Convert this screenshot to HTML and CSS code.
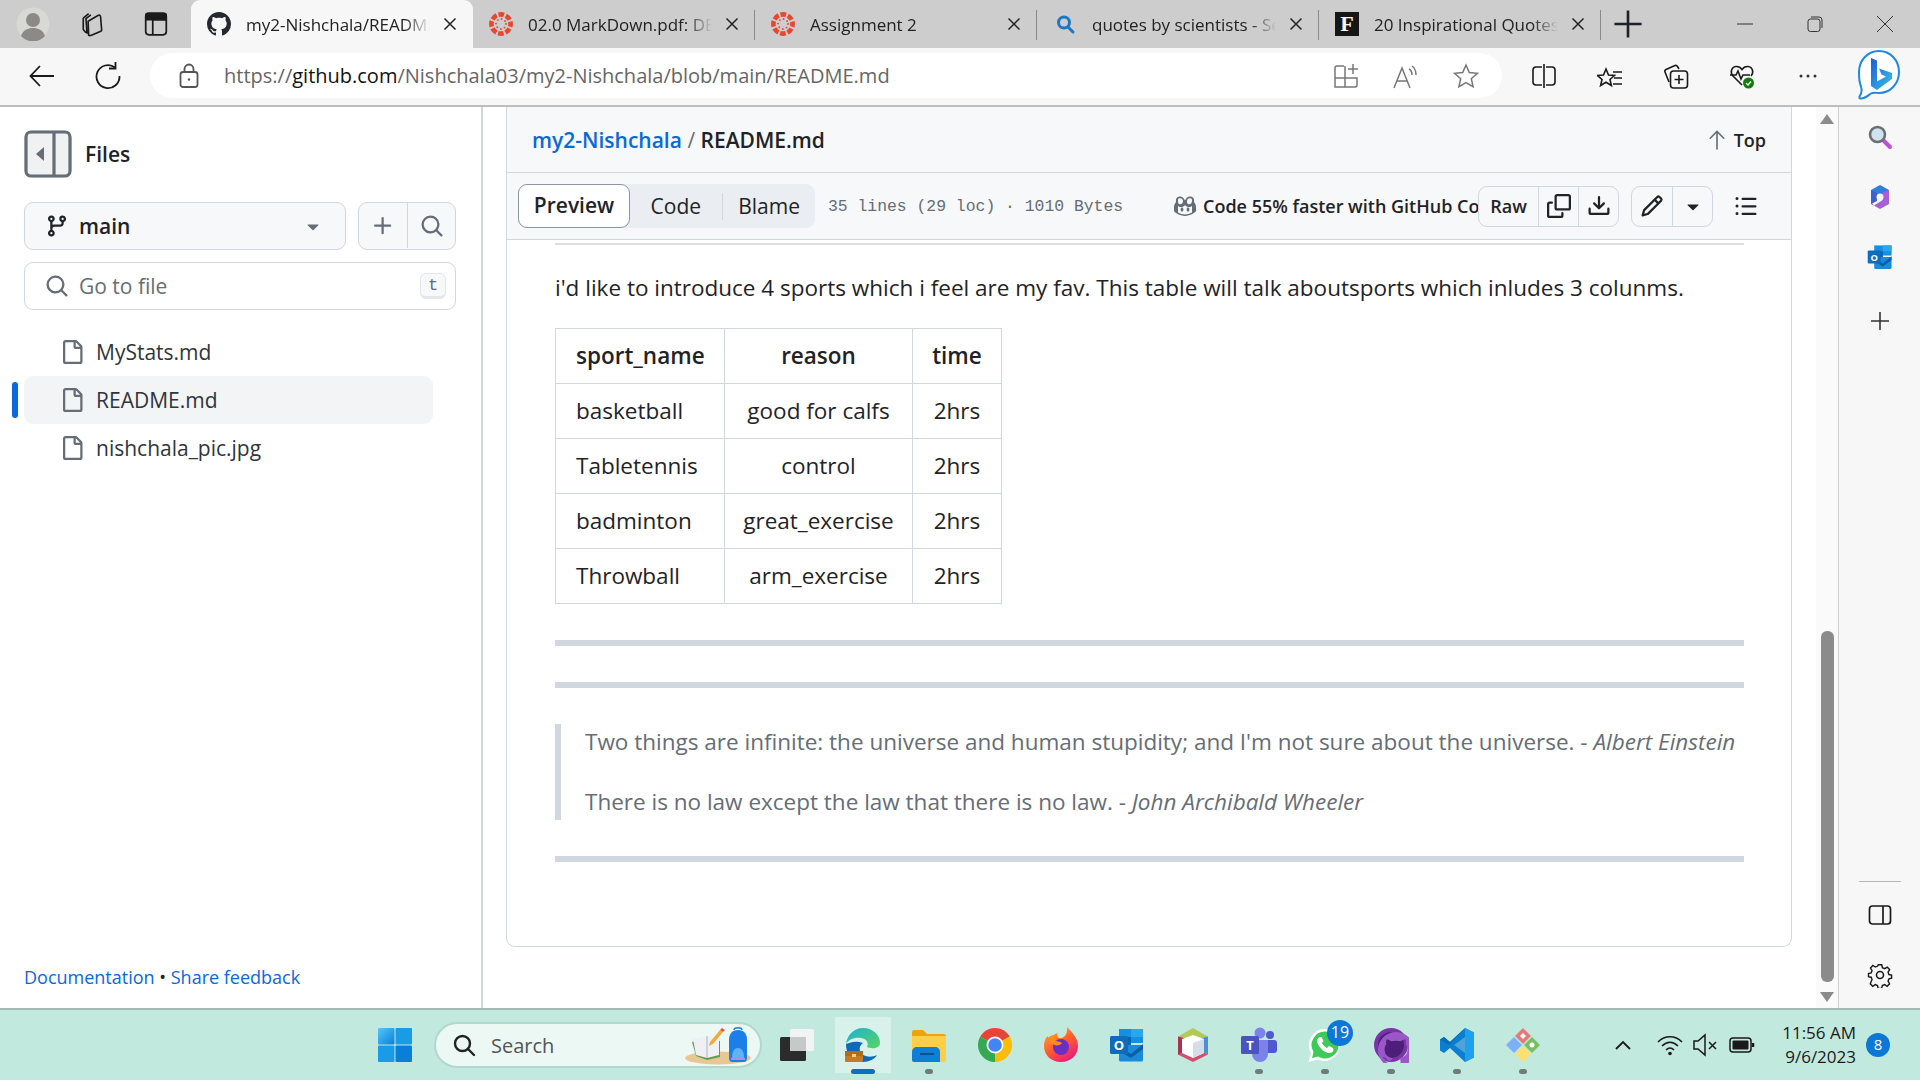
FILE: index.html
```html
<!DOCTYPE html>
<html lang="en">
<head>
  <meta charset="UTF-8">
  <title>my2-Nishchala/README.md</title>
  <link rel="stylesheet" href="styles.css">
</head>
<body>

  <!-- Octicons used more than once -->
  <svg class="sprite">
    <symbol id="i-github" viewBox="0 0 16 16"><path d="M8 0c4.42 0 8 3.58 8 8a8.013 8.013 0 0 1-5.45 7.59c-.4.08-.55-.17-.55-.38 0-.27.01-1.13.01-2.2 0-.75-.25-1.23-.54-1.48 1.78-.2 3.65-.88 3.65-3.95 0-.88-.31-1.59-.82-2.15.08-.2.36-1.02-.08-2.12 0 0-.67-.22-2.2.82-.64-.18-1.32-.27-2-.27-.68 0-1.36.09-2 .27-1.53-1.03-2.2-.82-2.2-.82-.44 1.1-.16 1.92-.08 2.12-.51.56-.82 1.28-.82 2.15 0 3.06 1.86 3.75 3.64 3.95-.23.2-.44.55-.51 1.07-.46.21-1.61.55-2.33-.66-.15-.24-.6-.83-1.23-.82-.67.01-.27.38.01.53.34.19.73.9.82 1.13.16.45.68 1.31 2.69.94 0 .67.01 1.3.01 1.49 0 .21-.15.45-.55.38A7.995 7.995 0 0 1 0 8c0-4.42 3.58-8 8-8Z"/></symbol>
    <symbol id="i-file" viewBox="0 0 16 16"><path d="M2 1.75C2 .784 2.784 0 3.75 0h6.586c.464 0 .909.184 1.237.513l2.914 2.914c.329.328.513.773.513 1.237v9.586A1.75 1.75 0 0 1 13.25 16h-9.5A1.75 1.75 0 0 1 2 14.25Zm1.75-.25a.25.25 0 0 0-.25.25v12.5c0 .138.112.25.25.25h9.5a.25.25 0 0 0 .25-.25V6h-2.75A1.75 1.75 0 0 1 9 4.25V1.5Zm6.75.062V4.25c0 .138.112.25.25.25h2.688l-.011-.013-2.914-2.914-.013-.011Z"/></symbol>
    <symbol id="i-search" viewBox="0 0 16 16"><path d="M10.68 11.74a6 6 0 0 1-7.922-8.982 6 6 0 0 1 8.982 7.922l3.04 3.04a.749.749 0 0 1-.326 1.275.749.749 0 0 1-.734-.215ZM11.5 7a4.499 4.499 0 1 0-8.997 0A4.499 4.499 0 0 0 11.5 7Z"/></symbol>
    <symbol id="i-plus" viewBox="0 0 16 16"><path d="M7.75 2a.75.75 0 0 1 .75.75V7h4.25a.75.75 0 0 1 0 1.5H8.5v4.25a.75.75 0 0 1-1.5 0V8.5H2.75a.75.75 0 0 1 0-1.5H7V2.75A.75.75 0 0 1 7.75 2Z"/></symbol>
    <symbol id="i-caret" viewBox="0 0 16 16"><path d="m4.427 7.427 3.396 3.396a.25.25 0 0 0 .354 0l3.396-3.396A.25.25 0 0 0 11.396 7H4.604a.25.25 0 0 0-.177.427Z"/></symbol>
    <symbol id="i-close" viewBox="0 0 16 16"><path d="M2.5 2.5l11 11M13.5 2.5l-11 11" fill="none" stroke="currentColor" stroke-width="1.5"/></symbol>
    <symbol id="i-canvas" viewBox="0 0 24 24">
      <circle cx="12" cy="12" r="9.6" fill="none" stroke="#e9452f" stroke-width="4.6" stroke-dasharray="5.6 1.94" stroke-dashoffset="2.8"/>
      <circle cx="12" cy="12" r="5" fill="none" stroke="#e9452f" stroke-width="1.9" stroke-linecap="round" stroke-dasharray="0 3.93"/>
    </symbol>
    <symbol id="i-outlook" viewBox="0 0 36 36">
      <rect x="10" y="2" width="24" height="14" fill="#1490df"/>
      <rect x="22" y="2" width="12" height="8" fill="#28a8ea"/>
      <rect x="10" y="10" width="12" height="8" fill="#0364b8"/>
      <path d="M10 18h24v15a1.5 1.5 0 0 1-1.500 1.500H11.500A1.500 1.500 0 0 1 10 33Z" fill="#1a8bd8"/>
      <path d="M10 19l12 8 12-10v5L22 31 10 24Z" fill="#0a5fa8"/>
      <rect x="1" y="9" width="18" height="18" rx="1.500" fill="#0f6cbd"/>
      <text x="10" y="23" class="logo-letter">O</text>
    </symbol>
  </svg>

  <!-- Browser tabs -->
  <header class="tabstrip">
    <div class="strip-left">
      <svg class="avatar" viewBox="0 0 34 34"><circle cx="17" cy="17" r="16.500" fill="#d8d8d4"/><circle cx="17" cy="13" r="7" fill="#8c8a87"/><path d="M5 29c2-6 7-8 12-8s10 2 12 8a16 16 0 0 1-24 0Z" fill="#8c8a87"/></svg>
      <svg class="strip-btn collections" viewBox="0 0 24 24" fill="none" stroke="#1a1a1a" stroke-width="1.500"><path d="M3 6.500 8 2.500M5.500 20 3 17V6.500M6.500 21 5.500 7 10 3.500M8 22.500 7.500 9.500 17 4c1-.5 2 0 2 1.500l1 12c0 .5-.2 1-.8 1.200L10 22.500c-1 .5-2 0-2-0Z"/></svg>
      <svg class="strip-btn vertical-tabs" viewBox="0 0 24 24" fill="none" stroke="#1a1a1a" stroke-width="1.600"><rect x="2.500" y="2" width="19" height="20" rx="3"/><path d="M3 3.500h18V8H9v14" /><path d="M3 3h18v5H3Z" fill="#1a1a1a"/></svg>
    </div>

    <div class="tab active">
      <svg class="fav github-fav"><use href="#i-github"/></svg>
      <span class="tab-title">my2-Nishchala/README.md</span>
      <svg class="tab-close"><use href="#i-close"/></svg>
    </div>
    <div class="tab">
      <svg class="fav"><use href="#i-canvas"/></svg>
      <span class="tab-title">02.0 MarkDown.pdf: DEMO</span>
      <svg class="tab-close"><use href="#i-close"/></svg>
    </div>
    <div class="tab">
      <svg class="fav"><use href="#i-canvas"/></svg>
      <span class="tab-title">Assignment 2</span>
      <svg class="tab-close"><use href="#i-close"/></svg>
    </div>
    <div class="tab">
      <svg class="fav" viewBox="0 0 24 24" fill="none" stroke="#1a78c9" stroke-width="3"><circle cx="11" cy="10.500" r="5.500"/><path d="M15 15l5 5" stroke-linecap="round"/></svg>
      <span class="tab-title">quotes by scientists - Search</span>
      <svg class="tab-close"><use href="#i-close"/></svg>
    </div>
    <div class="tab">
      <span class="fav forbes-fav">F</span>
      <span class="tab-title">20 Inspirational Quotes</span>
      <svg class="tab-close"><use href="#i-close"/></svg>
    </div>

    <svg class="new-tab"><use href="#i-close"/></svg>

    <div class="window-controls">
      <svg viewBox="0 0 16 16" fill="none" stroke="#333" stroke-width="1"><path d="M0 8h16"/></svg>
      <svg viewBox="0 0 16 16" fill="none" stroke="#333" stroke-width="1"><rect x="1" y="3" width="12" height="12.500" rx="2.500"/><path d="M4 1h8a3 3 0 0 1 3 3v8"/></svg>
      <svg viewBox="0 0 16 16" fill="none" stroke="#333" stroke-width="1"><path d="M0 0l16 16M16 0 0 16"/></svg>
    </div>
  </header>

  <!-- Address bar -->
  <div class="toolbar">
    <svg class="tool-icon back" viewBox="0 0 28 28" fill="none" stroke="#1a1a1a" stroke-width="1.800"><path d="M26 14H3M12 4 2.500 14 12 24"/></svg>
    <svg class="tool-icon reload" viewBox="0 0 28 28" fill="none" stroke="#1a1a1a" stroke-width="1.800"><path d="M21 5.500A11.500 11.500 0 1 0 25.500 14"/><path d="M21.500 0v6.500H15"/></svg>
    <div class="address">
      <svg class="lock" viewBox="0 0 20 26" fill="none" stroke="#555" stroke-width="1.800"><rect x="1.500" y="9" width="17" height="15" rx="2.500"/><path d="M5.500 9V6a4.500 4.500 0 0 1 9 0v3"/><circle cx="10" cy="16.500" r="1.200" fill="#555" stroke="none"/></svg>
      <span class="url">https://<b>github.com</b>/Nishchala03/my2-Nishchala/blob/main/README.md</span>
      <div class="address-icons">
        <svg viewBox="0 0 26 26" fill="none" stroke="#777" stroke-width="1.500"><path d="M11 3H4a2 2 0 0 0-2 2v19h20a2 2 0 0 0 2-2V15H2M12 3v21"/><path d="M20 1v10M15 6h10"/></svg>
        <svg viewBox="0 0 26 26" fill="none" stroke="#777" stroke-width="1.500"><path d="M1 25 9 5l8 20M4 18h10M16 6c2 1 3 3 3 6M19 3c3 2 4 5 4 9"/></svg>
        <svg viewBox="0 0 26 26" fill="none" stroke="#777" stroke-width="1.500"><path d="M13 2l3.300 7.500 8.200.8-6.200 5.400 1.800 8-7.100-4.200-7.100 4.200 1.800-8L1.500 10.300l8.200-.8Z"/></svg>
      </div>
    </div>
    <div class="tool-group">
      <svg viewBox="0 0 26 26" fill="none" stroke="#1a1a1a" stroke-width="1.600"><path d="M11 4H5a3 3 0 0 0-3 3v12a3 3 0 0 0 3 3h6M15 4h6a3 3 0 0 1 3 3v12a3 3 0 0 1-3 3h-6M13 1v24"/></svg>
      <svg viewBox="0 0 26 26" fill="none" stroke="#1a1a1a" stroke-width="1.600"><path d="M9 2l2.500 6 6 .5-4.500 4 1.400 6-5.400-3.300-5.400 3.300L5 12.500l-4.500-4 6-.5Z" transform="translate(0 4)"/><path d="M16 9h9M17 15h8M16 21h9"/></svg>
      <svg viewBox="0 0 26 26" fill="none" stroke="#1a1a1a" stroke-width="1.600"><path d="M6 19 2 9c-.4-1 0-2 1-2.500L12 2.500c1-.4 2 0 2.500 1L16 6"/><rect x="7.500" y="8" width="17" height="17" rx="3"/><path d="M16 12v9M11.500 16.500h9"/></svg>
      <svg viewBox="0 0 26 26" fill="none" stroke="#1a1a1a" stroke-width="1.600"><path d="M13 22 4 13C1 10 2 4 7 3.500c3-.3 5 1.500 6 3 1-1.500 3-3.300 6-3 5 .5 6 6.500 3 9.500"/><path d="M1 12h6l2-4 3 8 2-4h7"/><circle cx="19.500" cy="20" r="5.500" fill="#107c10" stroke="none"/><path d="M17 20l2 2 3-3.500" stroke="#fff" stroke-width="1.300"/></svg>
      <svg viewBox="0 0 26 26" fill="#333"><circle cx="6" cy="13" r="1.500"/><circle cx="13" cy="13" r="1.500"/><circle cx="20" cy="13" r="1.500"/></svg>
    </div>
    <svg class="bing" viewBox="0 0 44 54">
      <defs>
        <linearGradient id="bing-b" x1="0" y1="0" x2="1" y2="1"><stop offset="0" stop-color="#1a5bd8"/><stop offset="1" stop-color="#38c4e8"/></linearGradient>
      </defs>
      <path d="M22 2c11 0 20 9 20 21s-9 21-20 21c-3 0-6-.8-8 .5-3 2-6 5-10 5-2 0-2-1-1-3 2-3 2-6 1-9C2 33 2 28 2 23 2 11 11 2 22 2Z" fill="#fff" stroke="#1f87e5" stroke-width="2"/>
      <path d="M14 9l6 2.500v21l9-5-4.500-2-2.500-6 13 4.500v6L20 41l-6-4Z" fill="url(#bing-b)"/>
    </svg>
  </div>

  <div class="page">

    <!-- File tree -->
    <aside class="files">
      <div class="files-head">
        <span class="collapse-btn">
          <svg viewBox="0 0 24 24" fill="none" stroke="#656d76" stroke-width="1.600"><rect x="1" y="1" width="22" height="22" rx="2.500"/><path d="M15 1v22"/><path d="M10 8.500v7L6 12Z" fill="#656d76" stroke="none"/></svg>
        </span>
        <h2>Files</h2>
      </div>

      <div class="branch-row">
        <button class="branch-btn">
          <svg class="icon-24" viewBox="0 0 16 16" fill="#656d76"><path d="M9.500 3.250a2.250 2.250 0 1 1 3 2.122V6A2.500 2.500 0 0 1 10 8.500H6a1 1 0 0 0-1 1v1.128a2.251 2.251 0 1 1-1.500 0V5.372a2.250 2.250 0 1 1 1.500 0v1.836A2.493 2.493 0 0 1 6 7h4a1 1 0 0 0 1-1v-.628A2.250 2.250 0 0 1 9.500 3.250Zm-6 0a.750.750 0 1 0 1.500 0 .750.750 0 0 0-1.500 0Zm8.250-.750a.750.750 0 1 0 0 1.500.750.750 0 0 0 0-1.500ZM4.250 12a.750.750 0 1 0 0 1.500.750.750 0 0 0 0-1.500Z"/></svg>
          <span>main</span>
          <svg class="icon-24 branch-caret"><use href="#i-caret"/></svg>
        </button>
        <div class="btn-group square-btns">
          <button><svg class="icon-24"><use href="#i-plus"/></svg></button>
          <button><svg class="icon-24"><use href="#i-search"/></svg></button>
        </div>
      </div>

      <div class="go-to-file">
        <svg class="icon-24"><use href="#i-search"/></svg>
        <span>Go to file</span>
        <kbd>t</kbd>
      </div>

      <ul class="tree">
        <li><svg class="icon-24"><use href="#i-file"/></svg>MyStats.md</li>
        <li class="current"><svg class="icon-24"><use href="#i-file"/></svg>README.md</li>
        <li><svg class="icon-24"><use href="#i-file"/></svg>nishchala_pic.jpg</li>
      </ul>

      <p class="files-foot"><a href="#">Documentation</a> • <a href="#">Share feedback</a></p>
    </aside>

    <!-- File view -->
    <main class="content">
      <section class="card">
        <div class="card-head">
          <div class="crumbs"><a href="#">my2-Nishchala</a> <i>/</i> <b>README.md</b></div>
          <div class="top-link">
            <svg viewBox="0 0 20 24" fill="none" stroke="#656d76" stroke-width="1.800" stroke-linecap="round"><path d="M10 22V3M2.500 10 10 2.500l7.500 7.500"/></svg>
            Top
          </div>
        </div>

        <div class="card-tools">
          <div class="segmented">
            <span class="seg selected">Preview</span>
            <span class="seg">Code</span>
            <i class="seg-line"></i>
            <span class="seg">Blame</span>
          </div>
          <span class="file-meta">35 lines (29 loc) · 1010 Bytes</span>
          <div class="copilot">
            <svg viewBox="0 0 24 24" fill="#656d76"><path d="M12 6.500C10.500 3 8.500 2 6 2.500 3.500 3 2.500 5 3 8c-1 1-2 3-2 5v4c0 1 6 5 11 5s11-4 11-5v-4c0-2-1-4-2-5 .5-3-.5-5-3-5.500-2.500-.5-4.500.5-6 4ZM5 7c-.2-1.500.3-2.500 1.500-2.700 1.800-.3 3.500.5 3.500 3 0 2-1.500 3-3 3S5 9 5 7Zm9 .3c0-2.500 1.700-3.300 3.500-3C18.700 4.500 19.200 5.500 19 7c0 2-1.500 3.300-3 3.300S14 9.300 14 7.300ZM12 11c1 1.500 2.500 2 4 2 1.500 0 2.500-.5 3-1v6.500c-2 1.300-4.500 2-7 2s-5-.7-7-2V12c.5.500 1.500 1 3 1 1.500 0 3-.5 4-2Zm-3 2.500c-.8 0-1.300.5-1.300 1.500v1c0 1 .5 1.500 1.300 1.500s1.300-.5 1.300-1.500v-1c0-1-.5-1.500-1.300-1.500Zm6 0c-.8 0-1.300.5-1.300 1.500v1c0 1 .5 1.500 1.300 1.500s1.300-.5 1.300-1.500v-1c0-1-.5-1.500-1.300-1.500Z" fill-rule="evenodd"/></svg>
            <span>Code 55% faster with GitHub Copilot</span>
          </div>
          <div class="btn-group raw-btns">
            <button class="raw">Raw</button>
            <button>
              <svg class="icon-24" viewBox="0 0 16 16"><path d="M0 6.750C0 5.784.784 5 1.750 5h1.500a.750.750 0 0 1 0 1.500h-1.500a.250.250 0 0 0-.250.250v7.500c0 .138.112.250.250.250h7.500a.250.250 0 0 0 .250-.250v-1.500a.750.750 0 0 1 1.500 0v1.500A1.750 1.750 0 0 1 9.250 16h-7.500A1.750 1.750 0 0 1 0 14.250Z"/><path d="M5 1.750C5 .784 5.784 0 6.750 0h7.500C15.216 0 16 .784 16 1.750v7.500A1.750 1.750 0 0 1 14.250 11h-7.500A1.750 1.750 0 0 1 5 9.250Zm1.750-.250a.250.250 0 0 0-.250.250v7.500c0 .138.112.250.250.250h7.500a.250.250 0 0 0 .250-.250v-7.500a.250.250 0 0 0-.250-.250Z"/></svg>
            </button>
            <button>
              <svg class="icon-24" viewBox="0 0 16 16"><path d="M2.750 14A1.750 1.750 0 0 1 1 12.250v-2.500a.750.750 0 0 1 1.500 0v2.500c0 .138.112.250.250.250h10.500a.250.250 0 0 0 .250-.250v-2.500a.750.750 0 0 1 1.500 0v2.500A1.750 1.750 0 0 1 13.250 14Z"/><path d="M7.250 7.689V2a.750.750 0 0 1 1.500 0v5.689l1.970-1.969a.749.749 0 1 1 1.060 1.060l-3.250 3.250a.749.749 0 0 1-1.060 0L4.220 6.780a.749.749 0 1 1 1.060-1.060l1.970 1.969Z"/></svg>
            </button>
          </div>
          <div class="btn-group edit-btns">
            <button>
              <svg class="icon-24" viewBox="0 0 16 16"><path d="M11.013 1.427a1.750 1.750 0 0 1 2.474 0l1.086 1.086a1.750 1.750 0 0 1 0 2.474l-8.610 8.610c-.210.210-.470.364-.756.445l-3.251.930a.750.750 0 0 1-.927-.928l.929-3.250c.081-.286.235-.547.445-.758l8.610-8.610Zm.176 4.823L9.750 4.810l-6.286 6.287a.253.253 0 0 0-.064.108l-.558 1.953 1.953-.558a.253.253 0 0 0 .108-.064Zm1.238-3.763a.250.250 0 0 0-.354 0L10.811 3.750l1.439 1.440 1.263-1.263a.250.250 0 0 0 0-.354Z"/></svg>
            </button>
            <button><svg class="icon-24"><use href="#i-caret"/></svg></button>
          </div>
          <svg class="icon-24 outline-btn" viewBox="0 0 16 16" fill="#656d76"><path d="M5.750 2.500h8.500a.750.750 0 0 1 0 1.500h-8.500a.750.750 0 0 1 0-1.500Zm0 5h8.500a.750.750 0 0 1 0 1.500h-8.500a.750.750 0 0 1 0-1.500Zm0 5h8.500a.750.750 0 0 1 0 1.500h-8.500a.750.750 0 0 1 0-1.500ZM2 14a1 1 0 1 1 0-2 1 1 0 0 1 0 2Zm1-6a1 1 0 1 1-2 0 1 1 0 0 1 2 0ZM2 4a1 1 0 1 1 0-2 1 1 0 0 1 0 2Z"/></svg>
        </div>

        <article class="markdown">
          <div class="cut-rule"></div>
          <p>i'd like to introduce 4 sports which i feel are my fav. This table will talk aboutsports which inludes 3 colunms.</p>

          <table>
            <thead>
              <tr><th>sport_name</th><th>reason</th><th>time</th></tr>
            </thead>
            <tbody>
              <tr><td>basketball</td><td>good for calfs</td><td>2hrs</td></tr>
              <tr><td>Tabletennis</td><td>control</td><td>2hrs</td></tr>
              <tr><td>badminton</td><td>great_exercise</td><td>2hrs</td></tr>
              <tr><td>Throwball</td><td>arm_exercise</td><td>2hrs</td></tr>
            </tbody>
          </table>

          <hr>
          <hr>

          <blockquote>
            <p>Two things are infinite: the universe and human stupidity; and I'm not sure about the universe. - <em>Albert Einstein</em></p>
            <p>There is no law except the law that there is no law. - <em>John Archibald Wheeler</em></p>
          </blockquote>

          <hr>
        </article>
      </section>
    </main>

    <!-- Page scrollbar -->
    <div class="scrollbar">
      <i class="arrow-up"></i>
      <i class="thumb"></i>
      <i class="arrow-down"></i>
    </div>

    <!-- Edge sidebar -->
    <aside class="edge-bar">
      <svg viewBox="0 0 26 26" fill="none"><path d="M16 16l7 7" stroke="#c04fd8" stroke-width="4" stroke-linecap="round"/><circle cx="10.500" cy="10.500" r="7.500" fill="#cfe3ee" stroke="#6b6f73" stroke-width="2.600"/></svg>
      <svg viewBox="0 0 26 26"><path d="M13 1 22 6v6H4V6Z" fill="#2d7fd8"/><path d="M4 6l6 3v8l-6 3Z" fill="#3f5fd0"/><path d="M22 6v14l-9 5-6-3.500 8-5V9Z" fill="#a560d8"/><path d="M4 18l3 3.500 6 3.500-9-5Z" fill="#7a4fc8"/><circle cx="13" cy="13" r="3.500" fill="#f7f7f7"/></svg>
      <svg viewBox="0 0 36 36"><use href="#i-outlook"/></svg>
      <svg class="edge-plus" viewBox="0 0 26 26" fill="none" stroke="#333" stroke-width="1.600"><path d="M13 4v18M4 13h18"/></svg>
      <i class="edge-rule"></i>
      <svg viewBox="0 0 26 26" fill="none" stroke="#1a1a1a" stroke-width="1.700"><rect x="2.500" y="4" width="21" height="18" rx="3"/><path d="M16 4v18"/></svg>
      <svg viewBox="0 0 26 26" fill="none" stroke="#1a1a1a" stroke-width="1.600"><circle cx="13" cy="13" r="3.500"/><path d="M11 1.500h4l.7 3.300 2.600 1.100 2.900-1.800 2.700 2.900-1.800 2.800 1 2.700 3 .7v3.500l-3 .7-1 2.600 1.700 2.900-2.800 2.800-2.800-1.800-2.600 1-.7 3.200h-4l-.7-3.200-2.600-1-2.800 1.800-2.800-2.800L4 18.100l-1-2.600-3-.7v-3.500l3-.7 1-2.700-1.800-2.800 2.700-2.900 2.900 1.800 2.600-1.100Z" transform="translate(1.500 1.500) scale(.885)"/></svg>
    </aside>
  </div>

  <!-- Windows taskbar -->
  <footer class="taskbar">
    <svg class="win-logo" viewBox="0 0 36 36">
      <defs>
        <linearGradient id="win-a" x1="0" y1="0" x2="1" y2="1"><stop offset="0" stop-color="#52c8fa"/><stop offset="1" stop-color="#0a7fd8"/></linearGradient>
      </defs>
      <rect x="1" y="1" width="16.500" height="16.500" rx="1" fill="url(#win-a)"/>
      <rect x="18.500" y="1" width="16.500" height="16.500" rx="1" fill="#1a9be8"/>
      <rect x="1" y="18.500" width="16.500" height="16.500" rx="1" fill="#1a9be8"/>
      <rect x="18.500" y="18.500" width="16.500" height="16.500" rx="1" fill="#0a7fd8"/>
    </svg>

    <div class="task-search">
      <svg viewBox="0 0 24 24" fill="none" stroke="#222" stroke-width="2.400"><circle cx="10.500" cy="10.500" r="7.500"/><path d="M16 16l6 6" stroke-linecap="round"/></svg>
      <span>Search</span>
      <svg class="search-art" viewBox="0 0 70 40">
        <ellipse cx="34" cy="33" rx="33" ry="6.500" fill="#e9c795"/>
        <path d="M8 17l15-4 13 3v16l-13 3-11-4Z" fill="#5ea04e"/>
        <path d="M9 14l14-3 12 3v16l-12 3-11-3Z" fill="#eef0f4"/>
        <path d="M23 11v22" stroke="#a9b4c4"/>
        <path d="M26 17l10-12 3 2-10 12-4 2Z" fill="#f3a93c"/>
        <path d="M36 5l2-2 3 2-2 2Z" fill="#e8533c"/>
        <path d="M45 15c0-6 3-10 9-10s9 4 9 10v18c0 2-1 4-3 4H48c-2 0-3-2-3-4Z" fill="#1c7ee8"/>
        <path d="M48 33c0-6 2-10 6-10s6 4 6 10Z" fill="#5cb4f2"/>
        <path d="M50 5c0-3 8-3 8 0" fill="none" stroke="#1c7ee8" stroke-width="1.500"/>
        <rect x="47" y="33" width="14" height="2" fill="#b28ae8"/>
      </svg>
    </div>

    <div class="task-icons">
      <div class="task-item">
        <svg viewBox="0 0 36 36"><rect x="11" y="2" width="24" height="22" rx="1.500" fill="#f1f4f3"/><rect x="1" y="10" width="26" height="24" rx="1.500" fill="#2b2b2b"/><rect x="11" y="10" width="16" height="14" fill="#c6c9c9"/></svg>
      </div>
      <div class="task-item active">
        <svg viewBox="0 0 36 36">
          <defs>
            <linearGradient id="edge-g" x1="0" y1="0" x2="1" y2="1"><stop offset="0" stop-color="#1eb0d8"/><stop offset="1" stop-color="#57d65c"/></linearGradient>
          </defs>
          <path d="M18 1C9 1 2 8 1 17c3-5 9-7 15-6 6 1 8 5 6 9 4 2 13 2 13-4C35 8 28 1 18 1Z" fill="url(#edge-g)"/>
          <path d="M1 17c-.5 9 6 18 17 18 6 0 12-3 14-7-6 3-15 2-17-4-1-3 0-6 3-8-8-3-14 0-17 1Z" fill="#0d6ab8"/>
          <rect x="0" y="24" width="18" height="11" rx="1" fill="#c77a1f"/>
          <rect x="0" y="24" width="18" height="5" fill="#b5691a"/>
          <rect x="7" y="27" width="4" height="3" fill="#f8d27a"/>
        </svg>
        <i class="run-bar"></i>
      </div>
      <div class="task-item">
        <svg viewBox="0 0 36 36"><path d="M1 5a2 2 0 0 1 2-2h9l4 4h17a2 2 0 0 1 2 2v4H1Z" fill="#e8a50f"/><path d="M1 9h34v24a2 2 0 0 1-2 2H3a2 2 0 0 1-2-2Z" fill="#fbcf4a"/><path d="M1 25c0-3 2-5 5-5h18c3 0 5 2 5 5v10H3a2 2 0 0 1-2-2Z" fill="#0f7fd6"/><path d="M9 27h14" stroke="#0a4f90" stroke-width="2"/></svg>
        <i class="run-dot"></i>
      </div>
      <div class="task-item">
        <svg viewBox="0 0 36 36"><path d="M18 18 3.300 9.500A17 17 0 0 1 32.700 9.500Z" fill="#ea4335"/><path d="M18 18 32.700 9.500A17 17 0 0 1 18 35Z" fill="#fbbc05"/><path d="M18 18 18 35A17 17 0 0 1 3.300 9.500Z" fill="#34a853"/><circle cx="18" cy="18" r="8.500" fill="#fff"/><circle cx="18" cy="18" r="6.800" fill="#4285f4"/></svg>
      </div>
      <div class="task-item">
        <svg viewBox="0 0 36 36">
          <defs>
            <linearGradient id="ff-g" x1="0" y1="0" x2=".6" y2="1"><stop offset="0" stop-color="#ffb02e"/><stop offset=".6" stop-color="#ff5a2e"/><stop offset="1" stop-color="#e8207a"/></linearGradient>
          </defs>
          <path d="M24 0c5 5 11 11 11 19 0 9-7 16-17 16S1 28 1 19c0-4 1-8 4-10 0 2 1 4 2 4 1-3 4-6 8-7-2 3-1 4 1 5 5 1 9-4 8-11Z" fill="url(#ff-g)"/>
          <circle cx="18" cy="20" r="8" fill="#6a2fc0"/>
          <path d="M4 12c3-4 8-5 12-3-3 1-4 3-4 5 3 0 6 1 7 2-2 3-7 3-9 1-3-1-5-3-6-5Z" fill="#ff8a1e"/>
        </svg>
      </div>
      <div class="task-item">
        <svg viewBox="0 0 36 36"><use href="#i-outlook"/></svg>
      </div>
      <div class="task-item">
        <svg viewBox="0 0 36 36"><path d="M18 1 33 9.500 18 13 3 9.500Z" fill="#b2c957"/><path d="M3 9.500 18 13v4L7 12v14l-4 2Z" fill="#a8344e"/><path d="M33 9.500v18l-4-2V12L18 17v-4Z" fill="#4a90d4"/><path d="M3 27.500 18 35l15-7.500-4-2-11 5-11-5Z" fill="#d84a6e"/><path d="M7 12l11-4 11 4v14l-11 5-11-5Z" fill="#fff"/><path d="M18 16l11-4v14l-11 5Z" fill="#d5dde8"/></svg>
      </div>
      <div class="task-item">
        <svg viewBox="0 0 36 36"><circle cx="29" cy="8" r="4" fill="#5059c9"/><rect x="24" y="13" width="12" height="13" rx="3" fill="#5059c9"/><circle cx="19" cy="6" r="5.500" fill="#7b83eb"/><path d="M11 13h16v14a8 8 0 0 1-16 0Z" fill="#7b83eb"/><rect x="0" y="9" width="18" height="18" rx="1.500" fill="#4b53bc"/><text x="9" y="23" class="logo-letter">T</text></svg>
        <i class="run-dot"></i>
      </div>
      <div class="task-item">
        <svg viewBox="0 0 36 36"><path d="M18 2A16 16 0 0 0 4 26L1.500 35l9-2.500A16 16 0 1 0 18 2Z" fill="#fff"/><path d="M18 4.500A13.500 13.500 0 0 0 6.500 25l-1.500 6 6-1.500A13.500 13.500 0 1 0 18 4.500Z" fill="#3ec958"/><path d="M12.500 10c-2 1-3 3-2 6 2 5 6 9 11 10 3 0 5-1 5-3l-.5-2-4-2-2 2c-2-1-4-3-5-5l1.500-2-2-4Z" fill="#fff"/></svg>
        <span class="count-badge">19</span>
        <i class="run-dot"></i>
      </div>
      <div class="task-item">
        <svg viewBox="0 0 36 36"><circle cx="18" cy="18" r="17" fill="#7b34a8"/><circle cx="18" cy="18" r="13" fill="#4d1f78"/><svg x="5" y="5" width="26" height="26" fill="#9a57c8"><use href="#i-github"/></svg></svg>
        <i class="run-dot"></i>
      </div>
      <div class="task-item">
        <svg viewBox="0 0 36 36"><path d="M26 1 35 5.500v25L26 35 11 21l-6 5-4-2.500V12.500L5 10l6 5Z" fill="#0a7ed0"/><path d="M26 1 35 5.500v25L26 35Z" fill="#1ea0ee"/><path d="M26 10v16L15 18Z" fill="#d0e8e0" opacity=".35"/><path d="M26 1 11 15 5 10 1 12.500l9 5.500" fill="#0a6cb5"/></svg>
        <i class="run-dot"></i>
      </div>
      <div class="task-item">
        <svg viewBox="0 0 36 36"><path d="M9 10 17 18 9 26 1 18Z" fill="#7eb0f8"/><path d="M18 1l8 8-8 8-8-8Z" fill="#e67a78"/><path d="M27 10l8 8-8 8-8-8Z" fill="#76c060"/><path d="M18 19l8 8-8 8-8-8Z" fill="#fbe070"/><path d="M18 6l3 3-3 3-3-3Z" fill="#fff"/><circle cx="27" cy="18" r="2.500" fill="#fff"/></svg>
        <i class="run-dot"></i>
      </div>
    </div>

    <div class="tray">
      <svg class="tray-chevron" viewBox="0 0 24 24" fill="none" stroke="#1a1a1a" stroke-width="1.800"><path d="M5 16l7-7 7 7"/></svg>
      <svg class="tray-wifi" viewBox="0 0 26 26" fill="none" stroke="#1a1a1a" stroke-width="1.600"><path d="M1 10c7-7 17-7 24 0M5 14c5-5 11-5 16 0M9 18c2.500-2.500 5.500-2.500 8 0"/><circle cx="13" cy="21.500" r="1.800" fill="#1a1a1a" stroke="none"/></svg>
      <svg class="tray-volume" viewBox="0 0 26 26" fill="none" stroke="#1a1a1a" stroke-width="1.500"><path d="M2 9h4l7-6v20l-7-6H2Z"/><path d="M17 10l7 7M24 10l-7 7"/></svg>
      <svg class="tray-battery" viewBox="0 0 26 18" fill="none" stroke="#1a1a1a" stroke-width="1.500"><rect x="1" y="2" width="21" height="14" rx="3"/><rect x="3.500" y="4.500" width="16" height="9" rx="1" fill="#1a1a1a" stroke="none"/><path d="M24 7v4" stroke-width="2.500"/></svg>
      <div class="clock">11:56 AM<br>9/6/2023</div>
      <span class="notify">8</span>
    </div>
  </footer>

</body>
</html>
```

FILE: styles.css
```css
/* Basic Reset */
* {
  margin: 0;
  padding: 0;
  box-sizing: border-box;
}

body {
  width: 1920px;
  height: 1080px;
  overflow: hidden;
  display: flex;
  flex-direction: column;
  font-family: "Open Sans", "Liberation Sans", sans-serif;
  font-size: 22px;
  color: #1f2328;
  background-color: #fff;
}

.sprite {
  display: none;
}

.logo-letter {
  font-family: "Open Sans", sans-serif;
  font-size: 13px;
  font-weight: 700;
  fill: #fff;
  text-anchor: middle;
}

svg {
  flex-shrink: 0;
}

a {
  color: #0969da;
  text-decoration: none;
}

button {
  font: inherit;
  color: inherit;
  border: none;
  background: none;
}

.icon-24 {
  width: 24px;
  height: 24px;
  fill: currentColor;
}

/* Tab strip */
.tabstrip {
  height: 48px;
  display: flex;
  align-items: center;
  background-color: #cdcdcd;
}

.strip-left {
  width: 191px;
  display: flex;
  align-items: center;
}

.avatar {
  width: 34px;
  height: 34px;
  margin-left: 16px;
}

.strip-btn {
  width: 26px;
  height: 26px;
}

.collections {
  margin-left: 30px;
}

.vertical-tabs {
  margin-left: 37px;
}

.tab {
  position: relative;
  width: 282px;
  height: 48px;
  display: flex;
  align-items: center;
  font-size: 17px;
  color: #222;
}

.tab::after {
  content: "";
  position: absolute;
  right: 0;
  top: 10px;
  height: 30px;
  width: 1px;
  background-color: #8a8a8a;
}

.tab.active {
  background-color: #f7f7f7;
  border-radius: 9px 9px 0 0;
}

.tab.active::after {
  display: none;
}

.fav {
  width: 24px;
  height: 24px;
  margin-left: 16px;
}

.github-fav {
  fill: #24292f;
}

.forbes-fav {
  display: flex;
  align-items: center;
  justify-content: center;
  background-color: #161616;
  color: #fff;
  font-family: "Liberation Serif", serif;
  font-weight: 700;
  font-size: 22px;
}

.tab-title {
  width: 184px;
  margin-left: 15px;
  overflow: hidden;
  white-space: nowrap;
  -webkit-mask-image: linear-gradient(to right, #000 86%, transparent 100%);
  mask-image: linear-gradient(to right, #000 86%, transparent 100%);
}

.tab-close {
  width: 16px;
  height: 16px;
  margin-left: auto;
  margin-right: 15px;
}

.new-tab {
  width: 28px;
  height: 28px;
  margin-left: 13px;
  transform: rotate(45deg);
}

.window-controls {
  margin-left: auto;
  display: flex;
}

.window-controls svg {
  width: 16px;
  height: 16px;
  margin: 0 27px;
}

/* Address bar */
.toolbar {
  height: 59px;
  display: flex;
  align-items: center;
  padding-bottom: 2px;
  background-color: #f7f7f7;
  border-bottom: 2px solid #bdbdbd;
}

.tool-icon {
  width: 28px;
  height: 28px;
}

.back {
  margin-left: 28px;
}

.reload {
  margin-left: 38px;
}

.address {
  width: 1352px;
  height: 45px;
  margin-left: 28px;
  padding: 0 23px 0 29px;
  display: flex;
  align-items: center;
  background-color: #fff;
  border-radius: 23px;
}

.lock {
  width: 20px;
  height: 26px;
}

.url {
  margin-left: 25px;
  font-size: 20px;
  color: #666;
  white-space: nowrap;
}

.url b {
  font-weight: 400;
  color: #111;
}

.address-icons {
  margin-left: auto;
  display: flex;
  gap: 34px;
}

.address-icons svg {
  width: 26px;
  height: 26px;
}

.tool-group {
  margin-left: 29px;
  display: flex;
  gap: 40px;
}

.tool-group svg {
  width: 26px;
  height: 26px;
}

.bing {
  width: 46px;
  height: 54px;
  margin-left: 35px;
}

/* Main area */
.page {
  flex: 1;
  min-height: 0;
  display: flex;
}

/* File tree */
.files {
  width: 483px;
  display: flex;
  flex-direction: column;
  padding: 23px 25px 0 24px;
  border-right: 2px solid #d0d7de;
}

.files-head {
  display: flex;
  align-items: center;
  gap: 13px;
}

.files-head h2 {
  font-size: 21px;
  font-weight: 600;
}

.collapse-btn {
  width: 48px;
  height: 48px;
  display: flex;
  align-items: center;
  justify-content: center;
  background-color: #eff1f3;
  border-radius: 9px;
}

.branch-row {
  margin-top: 24px;
  display: flex;
  gap: 12px;
}

.branch-btn {
  flex: 1;
  height: 48px;
  display: flex;
  align-items: center;
  gap: 10px;
  padding: 0 20px;
  font-size: 21px;
  font-weight: 600;
  background-color: #f6f8fa;
  border: 1.5px solid #d0d7de;
  border-radius: 9px;
}

.branch-caret {
  margin-left: auto;
  fill: #656d76;
}

.btn-group {
  display: flex;
  background-color: #f6f8fa;
  border: 1.5px solid #d0d7de;
  border-radius: 9px;
}

.btn-group button {
  display: flex;
  align-items: center;
  justify-content: center;
  border-left: 1.5px solid #d0d7de;
}

.btn-group button:first-child {
  border-left: none;
}

.square-btns button {
  width: 48px;
  height: 45px;
  color: #656d76;
}

.go-to-file {
  height: 48px;
  margin-top: 12px;
  display: flex;
  align-items: center;
  gap: 10px;
  padding: 0 9px 0 20px;
  font-size: 21px;
  color: #656d76;
  border: 1.5px solid #d0d7de;
  border-radius: 9px;
}

.go-to-file kbd {
  margin-left: auto;
  width: 26px;
  height: 26px;
  line-height: 24px;
  text-align: center;
  font-family: "Liberation Mono", monospace;
  font-size: 17px;
  background-color: #f6f8fa;
  border: 1px solid #e3e7eb;
  border-bottom-width: 3px;
  border-radius: 6px;
}

.tree {
  list-style-type: none;
  margin-top: 18px;
}

.tree li {
  position: relative;
  width: 409px;
  height: 48px;
  display: flex;
  align-items: center;
  gap: 12px;
  padding-left: 36px;
  font-size: 21px;
  color: #2f353b;
  border-radius: 9px;
}

.tree svg {
  color: #656d76;
}

.tree li.current {
  background-color: #f3f4f6;
}

.tree li.current::before {
  content: "";
  position: absolute;
  left: -12px;
  top: 6px;
  width: 6px;
  height: 36px;
  background-color: #0969da;
  border-radius: 3px;
}

.files-foot {
  margin-top: auto;
  padding-bottom: 19px;
  font-size: 18px;
  color: #1f2328;
}

/* File view */
.content {
  flex: 1;
  min-width: 0;
  padding: 0 24px 0 23px;
}

.card {
  height: 840px;
  background-color: #fff;
  border: 1.5px solid #d0d7de;
  border-top: none;
  border-radius: 0 0 9px 9px;
}

.card-head {
  height: 66px;
  display: flex;
  align-items: center;
  justify-content: space-between;
  padding: 0 25px;
  background-color: #f6f8fa;
  border-bottom: 1.5px solid #d0d7de;
}

.crumbs {
  font-size: 21px;
}

.crumbs a {
  font-weight: 600;
}

.crumbs i {
  font-style: normal;
  color: #656d76;
}

.crumbs b {
  font-weight: 600;
}

.top-link {
  display: flex;
  align-items: center;
  gap: 8px;
  font-size: 18px;
  font-weight: 600;
}

.top-link svg {
  width: 18px;
  height: 22px;
}

.card-tools {
  height: 67px;
  display: flex;
  align-items: center;
  padding-left: 11px;
  background-color: #f6f8fa;
  border-bottom: 1.5px solid #d0d7de;
}

.segmented {
  width: 297px;
  height: 44px;
  display: flex;
  align-items: center;
  background-color: #eaeef2;
  border-radius: 9px;
  font-size: 21px;
}

.seg {
  flex: 1;
  text-align: center;
}

.seg.selected {
  flex: none;
  width: 112px;
  height: 44px;
  line-height: 41px;
  font-weight: 600;
  background-color: #fff;
  border: 1.5px solid #8c959f;
  border-radius: 9px;
}

.seg-line {
  width: 1.5px;
  height: 27px;
  background-color: #d0d7de;
}

.file-meta {
  width: 296px;
  flex: none;
  margin-left: 13px;
  font-family: "Liberation Mono", monospace;
  font-size: 16.400px;
  color: #656d76;
  white-space: nowrap;
}

.copilot {
  flex: 1;
  min-width: 0;
  margin-left: 49px;
  display: flex;
  align-items: center;
  gap: 6px;
  font-size: 18px;
  font-weight: 600;
  white-space: nowrap;
  overflow: hidden;
}

.copilot svg {
  width: 24px;
  height: 24px;
}

.raw-btns,
.edit-btns {
  height: 41px;
  flex: none;
}

.raw-btns button,
.edit-btns button {
  width: 40px;
}

.raw-btns .raw {
  width: 59px;
  font-size: 18px;
  font-weight: 600;
}

.edit-btns {
  margin-left: 12px;
}

.outline-btn {
  margin: 0 33px 0 21px;
}

/* Rendered markdown */
.markdown {
  padding: 3px 47px 0 48px;
  font-size: 22.500px;
  line-height: 36px;
}

.cut-rule {
  height: 2px;
  background-color: #d8dee4;
}

.markdown p {
  margin-top: 25px;
  white-space: nowrap;
}

.markdown table {
  margin-top: 22px;
  width: 447px;
  table-layout: fixed;
  border-collapse: collapse;
}

.markdown th,
.markdown td {
  height: 55px;
  text-align: center;
  border: 1.5px solid #d0d7de;
}

.markdown th {
  font-weight: 600;
}

.markdown th:first-child,
.markdown td:first-child {
  width: 169px;
  padding-left: 20px;
  text-align: left;
}

.markdown th:nth-child(2) {
  width: 188px;
}

.markdown hr {
  height: 6px;
  margin-top: 36px;
  border: none;
  background-color: #d0d7de;
}

.markdown blockquote {
  margin-top: 36px;
  padding-left: 24px;
  color: #656d76;
  border-left: 6px solid #d0d7de;
}

.markdown blockquote p {
  margin: 0 0 24px;
  white-space: normal;
}

.markdown blockquote p:last-child {
  margin-bottom: 0;
}

/* Page scrollbar */
.scrollbar {
  width: 22px;
  display: flex;
  flex-direction: column;
  align-items: center;
  background-color: #fafafa;
}

.arrow-up {
  margin-top: 7px;
  border: 7.500px solid transparent;
  border-top: none;
  border-bottom: 10px solid #8b8b8b;
}

.thumb {
  width: 13px;
  height: 351px;
  margin-top: 507px;
  background-color: #8b8b8b;
  border-radius: 6px;
}

.arrow-down {
  margin-top: 10px;
  border: 7.500px solid transparent;
  border-bottom: none;
  border-top: 10px solid #8b8b8b;
}

/* Edge sidebar */
.edge-bar {
  width: 82px;
  display: flex;
  flex-direction: column;
  align-items: center;
  gap: 34px;
  padding: 17px 0 20px;
  background-color: #f7f7f7;
  border-left: 1.500px solid #cfcfcf;
}

.edge-bar svg {
  width: 26px;
  height: 26px;
}

.edge-plus {
  margin-top: 4px;
}

.edge-rule {
  margin-top: auto;
  margin-bottom: -14px;
  width: 42px;
  height: 1.500px;
  background-color: #b5b5b5;
}

/* Taskbar */
.taskbar {
  height: 72px;
  display: flex;
  align-items: center;
  background-color: #c1e9de;
  border-top: 2px solid #a3bdb5;
}

.win-logo {
  width: 36px;
  height: 36px;
  margin-left: 377px;
}

.task-search {
  width: 328px;
  height: 46px;
  margin-left: 21px;
  display: flex;
  align-items: center;
  padding-left: 16px;
  font-size: 20px;
  color: #555;
  background-color: #ebf8f4;
  border: 2px solid #b2d8cd;
  border-radius: 23px;
}

.task-search svg {
  width: 24px;
  height: 24px;
}

.task-search span {
  margin-left: 15px;
}

.task-search .search-art {
  width: 70px;
  height: 40px;
  margin-left: auto;
  margin-right: 6px;
}

.task-icons {
  margin-left: 2px;
  display: flex;
}

.task-item {
  position: relative;
  width: 66px;
  height: 56px;
  display: flex;
  align-items: center;
  justify-content: center;
}

.task-item svg {
  width: 36px;
  height: 36px;
}

.task-item.active {
  background: linear-gradient(#d8f1ea, #d8f1ea) center / 56px 56px no-repeat;
}

.run-dot {
  position: absolute;
  left: 29px;
  bottom: -1px;
  width: 8px;
  height: 5px;
  background-color: #6f7d79;
  border-radius: 3px;
}

.run-bar {
  position: absolute;
  left: 21px;
  bottom: -1px;
  width: 24px;
  height: 5px;
  background-color: #0b6fc9;
  border-radius: 3px;
}

.count-badge {
  position: absolute;
  left: 35px;
  top: 3px;
  width: 26px;
  height: 26px;
  line-height: 25px;
  text-align: center;
  font-size: 16px;
  color: #fff;
  background-color: #0b78d6;
  border-radius: 50%;
}

.tray {
  margin-left: auto;
  padding-right: 30px;
  display: flex;
  align-items: center;
}

.tray-chevron {
  width: 24px;
  height: 24px;
}

.tray-wifi {
  width: 26px;
  height: 26px;
  margin-left: 22px;
}

.tray-volume {
  width: 26px;
  height: 26px;
  margin-left: 9px;
}

.tray-battery {
  width: 26px;
  height: 18px;
  margin-left: 11px;
}

.clock {
  width: 90px;
  margin: 0 10px 0 11px;
  text-align: right;
  font-size: 17px;
  line-height: 24px;
  color: #1a1a1a;
}

.notify {
  width: 24px;
  height: 24px;
  line-height: 23px;
  text-align: center;
  font-size: 15px;
  color: #fff;
  background-color: #0b78d6;
  border-radius: 50%;
}
```
